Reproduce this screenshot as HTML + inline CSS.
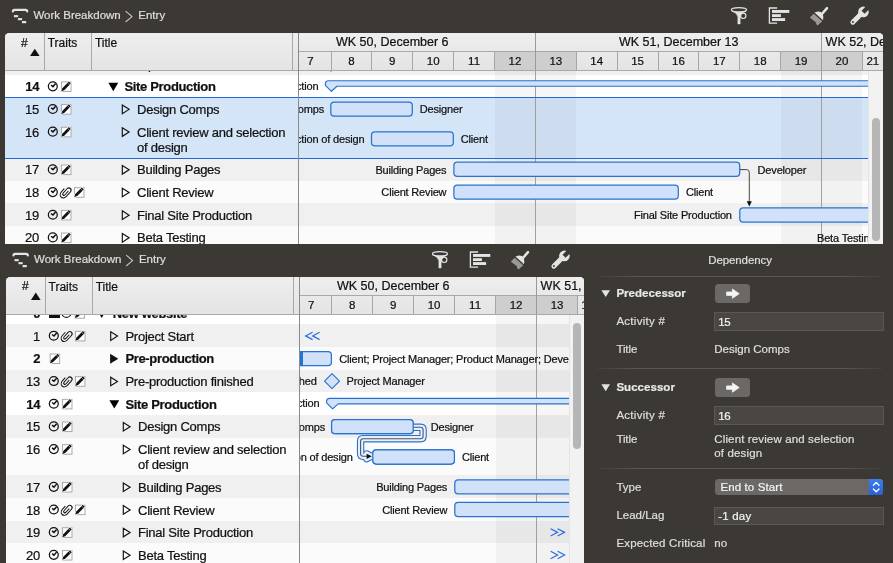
<!DOCTYPE html>
<html><head><meta charset="utf-8"><title>Work Breakdown</title>
<style>
html,body{margin:0;padding:0}
body{width:893px;height:563px;background:#3c3935;position:relative;overflow:hidden;font-family:"Liberation Sans",sans-serif;font-size:13px;line-height:16px;color:#111111}
.r{position:absolute;display:block}
.ic{overflow:visible}
.t{position:absolute;white-space:nowrap;-webkit-text-stroke:0.22px}
.p{position:absolute;overflow:hidden}
.b{box-sizing:border-box;border:1.3px solid #2873cf;background:#d0e1f9;border-radius:3.6px}
</style></head><body><div id="app" style="position:absolute;left:0;top:0;width:893px;height:563px;will-change:transform">
<svg width="0" height="0" style="position:absolute"><defs>
<g id="ck"><circle r="4.45" fill="none" stroke="#111" stroke-width="1.25"/><path d="M-1.7 -1.2 L0.2 0.3 L2.8 -2.7" fill="none" stroke="#111" stroke-width="1.5"/></g>
<g id="pc"><g transform="rotate(42)"><path d="M1.5 -2.6 L1.5 2.3 A1.5 1.5 0 0 1 -1.5 2.3 L-1.5 -3.2 A2.75 2.75 0 0 1 4 -3.2 L4 2.6 A4 4 0 0 1 -4 2.6 L-4 -1.8" transform="translate(-0.4 0.3) scale(0.84 1)" fill="none" stroke="#111" stroke-width="1.15"/></g></g>
<g id="nt"><rect x="-4.7" y="-4.7" width="9.6" height="9.6" fill="#fdfdfd" stroke="#a2a2a2" stroke-width="0.9"/><path d="M-4.9 4.7 L-3.8 1.7 L2.7 -5 L4.7 -3 L-1.9 3.7 Z" fill="#111" stroke="#fff" stroke-width="1.2" paint-order="stroke" stroke-linejoin="round"/><path d="M1.3 -3.9 L3.5 -1.7" stroke="#fff" stroke-width="0.5"/></g>
<path id="to" d="M0.6 -4.3 L7.4 0 L0.6 4.3 Z" fill="none" stroke="#111" stroke-width="1.15"/>
<path id="tr" d="M0 -5 L8.2 0 L0 5 Z" fill="#111"/>
<path id="td" d="M0 -4.2 L9.8 -4.2 L4.9 4.2 Z"/>
</defs></svg>
<svg class="r" style="left:10px;top:7px" width="20" height="18" viewBox="10 7 20 18"><g transform="translate(0 0)"><path d="M12.9 11.5 Q12.9 9.9 14.6 9.9 L25.5 9.9 Q27.2 9.9 27.2 11.5" fill="none" stroke="#e4e4e4" stroke-width="2.2" stroke-linecap="round"/><rect x="13.9" y="15.1" width="4.2" height="2.1" fill="#e4e4e4"/><rect x="17.9" y="18.1" width="4.2" height="2.1" fill="#e4e4e4"/><rect x="22" y="21" width="4.2" height="2.2" fill="#e4e4e4"/></g></svg>
<span class="t" style="left:33.4px;top:7px;font-size:11.5px;color:#dedede;">Work Breakdown</span>
<svg class="r" style="left:123px;top:9px" width="12" height="15" viewBox="123 9 12 15"><path d="M125.6 11.2 L132 16.6 L125.6 22" fill="none" stroke="#c6c6c6" stroke-width="1.1"/></svg>
<span class="t" style="left:138.3px;top:7px;font-size:11.5px;color:#dedede;">Entry</span>
<svg class="r" style="left:728px;top:4px" width="144" height="24" viewBox="728 4 144 24"><g transform="translate(0 0)"><ellipse cx="738.95" cy="9.8" rx="7.5" ry="2.2" fill="none" stroke="#e4e4e4" stroke-width="1.3"/><path d="M731.7 10.8 Q737 13.2 737.8 16.8 L737.8 24 L740.2 24 L740.2 16.8 Q741 13.2 746.3 10.8 Q739 13.6 731.7 10.8 Z" fill="#e4e4e4" stroke="#e4e4e4" stroke-width="0.4" stroke-linejoin="round"/><circle cx="743.2" cy="15.8" r="2.7" fill="none" stroke="#e4e4e4" stroke-width="1.15"/><path d="M777.1 8 L769.4 8 L769.4 23.2 L777.1 23.2" fill="none" stroke="#e4e4e4" stroke-width="1.3"/><rect x="772" y="10" width="17.3" height="2.9" fill="#e4e4e4"/><rect x="772" y="14.2" width="8.9" height="2.8" fill="#e4e4e4"/><rect x="772" y="18.1" width="13.1" height="2.9" fill="#e4e4e4"/><path d="M827 8.1 L821.3 14.7" stroke="#e4e4e4" stroke-width="2.5" stroke-linecap="round"/><path d="M814.5 12.5 Q818.4 10.9 820.8 11.9 L822.6 13.6 Q823.7 16.6 823 20.2 Z" fill="#e4e4e4"/><path d="M813.7 13.7 L822.2 21.2 L817.6 25.4 L815.6 23.6 L816.4 22.7 L809.8 17.5 Z" fill="#9a9794"/><path d="M852.8 22.2 L861 14" stroke="#e4e4e4" stroke-width="4.8" stroke-linecap="round"/><circle cx="863.4" cy="11.9" r="5.3" fill="#e4e4e4"/><path d="M863.1 12.2 L870 5.3" stroke="#3c3935" stroke-width="4.4"/><circle cx="852.9" cy="22.1" r="1" fill="#3c3935"/></g></svg>
<div class="p" style="left:5px;top:32.8px;width:878.3px;height:210.8px;background:#fbfbfb;border-radius:4.5px 4.5px 0 0;"><div class="r" style="left:-5px;top:-32.8px;width:893px;height:563px">
<div class="p" style="left:5px;top:70.5px;width:293.4px;height:173.1px;"><div class="r" style="left:-5px;top:-70.5px;width:893px;height:563px">
<div class="r" style="left:5px;top:52.23px;width:293.4px;height:22.97px;background:#f0f0f0;"></div>
<div class="r" style="left:5px;top:74.9px;width:293.4px;height:22.97px;background:#ffffff;"></div>
<div class="r" style="left:5px;top:97.57px;width:293.4px;height:22.97px;background:#d5e5f8;"></div>
<div class="r" style="left:5px;top:120.24px;width:293.4px;height:38.07px;background:#d5e5f8;"></div>
<div class="r" style="left:5px;top:158.01px;width:293.4px;height:22.97px;background:#f0f0f0;"></div>
<div class="r" style="left:5px;top:180.68px;width:293.4px;height:22.97px;background:#fbfbfb;"></div>
<div class="r" style="left:5px;top:203.35px;width:293.4px;height:22.97px;background:#f0f0f0;"></div>
<div class="r" style="left:5px;top:226.02px;width:293.4px;height:22.97px;background:#fbfbfb;"></div>
<span class="t" style="right:853.9px;top:57px;letter-spacing:-0.2px;">13</span>
<svg class="r" style="left:43px;top:54px" width="20" height="20" viewBox="-9.8 -9.63 20 20"><use href="#ck" /></svg>
<svg class="r" style="left:57px;top:54px" width="20" height="20" viewBox="-9.1 -9.83 20 20"><use href="#pc" /></svg>
<svg class="r" style="left:70px;top:54px" width="20" height="20" viewBox="-9.1 -9.93 20 20"><use href="#nt" /></svg>
<svg class="r" style="left:100px;top:55px" width="20" height="20" viewBox="-9.1 -9.03 20 20"><use href="#to" /></svg>
<span class="t" style="left:124.4px;top:57px;letter-spacing:-0.24px;">Pre-production finished</span>
<span class="t" style="right:853.9px;top:79px;font-weight:bold;letter-spacing:-0.3px;">14</span>
<svg class="r" style="left:43px;top:77px" width="20" height="20" viewBox="-9.8 -9.3 20 20"><use href="#ck" /></svg>
<svg class="r" style="left:57px;top:77px" width="20" height="20" viewBox="-9.1 -9.6 20 20"><use href="#nt" /></svg>
<svg class="r" style="left:99px;top:78px" width="20" height="20" viewBox="-9.4 -9 20 20"><use href="#td" /></svg>
<span class="t" style="left:124.4px;top:79px;font-weight:bold;letter-spacing:-0.33px;">Site Production</span>
<span class="t" style="right:853.9px;top:102px;letter-spacing:-0.2px;">15</span>
<svg class="r" style="left:43px;top:99px" width="20" height="20" viewBox="-9.8 -9.97 20 20"><use href="#ck" /></svg>
<svg class="r" style="left:57px;top:100px" width="20" height="20" viewBox="-9.1 -9.27 20 20"><use href="#nt" /></svg>
<svg class="r" style="left:112px;top:100px" width="20" height="20" viewBox="-9.7 -9.37 20 20"><use href="#to" /></svg>
<span class="t" style="left:137px;top:102px;letter-spacing:-0.24px;">Design Comps</span>
<span class="t" style="right:853.9px;top:125px;letter-spacing:-0.2px;">16</span>
<svg class="r" style="left:43px;top:122px" width="20" height="20" viewBox="-9.8 -9.64 20 20"><use href="#ck" /></svg>
<svg class="r" style="left:57px;top:122px" width="20" height="20" viewBox="-9.1 -9.94 20 20"><use href="#nt" /></svg>
<svg class="r" style="left:112px;top:123px" width="20" height="20" viewBox="-9.7 -9.04 20 20"><use href="#to" /></svg>
<span class="t" style="left:137px;top:125px;letter-spacing:-0.24px;">Client review and selection</span>
<span class="t" style="left:137px;top:140px;letter-spacing:-0.24px;">of design</span>
<span class="t" style="right:853.9px;top:162px;letter-spacing:-0.2px;">17</span>
<svg class="r" style="left:43px;top:160px" width="20" height="20" viewBox="-9.8 -9.41 20 20"><use href="#ck" /></svg>
<svg class="r" style="left:57px;top:160px" width="20" height="20" viewBox="-9.1 -9.71 20 20"><use href="#nt" /></svg>
<svg class="r" style="left:112px;top:160px" width="20" height="20" viewBox="-9.7 -9.81 20 20"><use href="#to" /></svg>
<span class="t" style="left:137px;top:162px;letter-spacing:-0.24px;">Building Pages</span>
<span class="t" style="right:853.9px;top:185px;letter-spacing:-0.2px;">18</span>
<svg class="r" style="left:43px;top:183px" width="20" height="20" viewBox="-9.8 -9.08 20 20"><use href="#ck" /></svg>
<svg class="r" style="left:57px;top:183px" width="20" height="20" viewBox="-9.1 -9.28 20 20"><use href="#pc" /></svg>
<svg class="r" style="left:70px;top:183px" width="20" height="20" viewBox="-9.1 -9.38 20 20"><use href="#nt" /></svg>
<svg class="r" style="left:112px;top:183px" width="20" height="20" viewBox="-9.7 -9.48 20 20"><use href="#to" /></svg>
<span class="t" style="left:137px;top:185px;letter-spacing:-0.24px;">Client Review</span>
<span class="t" style="right:853.9px;top:208px;letter-spacing:-0.2px;">19</span>
<svg class="r" style="left:43px;top:205px" width="20" height="20" viewBox="-9.8 -9.75 20 20"><use href="#ck" /></svg>
<svg class="r" style="left:57px;top:206px" width="20" height="20" viewBox="-9.1 -9.05 20 20"><use href="#nt" /></svg>
<svg class="r" style="left:112px;top:206px" width="20" height="20" viewBox="-9.7 -9.15 20 20"><use href="#to" /></svg>
<span class="t" style="left:137px;top:208px;letter-spacing:-0.24px;">Final Site Production</span>
<span class="t" style="right:853.9px;top:230px;letter-spacing:-0.2px;">20</span>
<svg class="r" style="left:43px;top:228px" width="20" height="20" viewBox="-9.8 -9.42 20 20"><use href="#ck" /></svg>
<svg class="r" style="left:57px;top:228px" width="20" height="20" viewBox="-9.1 -9.72 20 20"><use href="#nt" /></svg>
<svg class="r" style="left:112px;top:228px" width="20" height="20" viewBox="-9.7 -9.82 20 20"><use href="#to" /></svg>
<span class="t" style="left:137px;top:230px;letter-spacing:-0.24px;">Beta Testing</span>
</div></div>
<div class="r" style="left:5px;top:32.8px;width:293.4px;height:37.7px;background:linear-gradient(#eeeeee,#e4e4e4);"></div>
<div class="r" style="left:44.1px;top:32.8px;width:1px;height:37.7px;background:#a8a8a8;"></div>
<div class="r" style="left:91.1px;top:32.8px;width:1px;height:37.7px;background:#a8a8a8;"></div>
<div class="r" style="left:292.3px;top:32.8px;width:1px;height:37.7px;background:#a8a8a8;"></div>
<span class="t" style="left:21px;top:35px;font-size:12px;">#</span>
<svg class="r" style="left:29px;top:47px" width="12" height="11" viewBox="29 47 12 11"><path d="M30 56.1 L34.8 48.7 L39.6 56.1 Z" fill="#111"/></svg>
<span class="t" style="left:47.7px;top:35px;font-size:12px;">Traits</span>
<span class="t" style="left:94.9px;top:35px;font-size:12px;">Title</span>
<div class="p" style="left:298.4px;top:32.8px;width:569.6px;height:210.8px;"><div class="r" style="left:-298.4px;top:-32.8px;width:893px;height:563px">
<div class="r" style="left:298.4px;top:52.23px;width:569.6px;height:22.97px;background:#f0f0f0;"></div>
<div class="r" style="left:298.4px;top:74.9px;width:569.6px;height:22.97px;background:#ffffff;"></div>
<div class="r" style="left:298.4px;top:97.57px;width:569.6px;height:22.97px;background:#d5e5f8;"></div>
<div class="r" style="left:298.4px;top:120.24px;width:569.6px;height:38.07px;background:#d5e5f8;"></div>
<div class="r" style="left:298.4px;top:158.01px;width:569.6px;height:22.97px;background:#f0f0f0;"></div>
<div class="r" style="left:298.4px;top:180.68px;width:569.6px;height:22.97px;background:#fbfbfb;"></div>
<div class="r" style="left:298.4px;top:203.35px;width:569.6px;height:22.97px;background:#f0f0f0;"></div>
<div class="r" style="left:298.4px;top:226.02px;width:569.6px;height:22.97px;background:#fbfbfb;"></div>
<div class="r" style="left:494.52px;top:70.5px;width:40.88px;height:173.5px;background:rgba(0,0,0,0.035);"></div>
<div class="r" style="left:535.4px;top:70.5px;width:40.88px;height:173.5px;background:rgba(0,0,0,0.035);"></div>
<div class="r" style="left:780.68px;top:70.5px;width:40.88px;height:173.5px;background:rgba(0,0,0,0.035);"></div>
<div class="r" style="left:821.56px;top:70.5px;width:40.88px;height:173.5px;background:rgba(0,0,0,0.035);"></div>
<div class="r" style="left:534.9px;top:70.5px;width:1px;height:173.5px;background:#a0a0a0;"></div>
<div class="r" style="left:821.06px;top:70.5px;width:1px;height:173.5px;background:#a0a0a0;"></div>
<svg class="r" style="left:322px;top:78px" width="546" height="17" viewBox="322 78 546 17"><path d="M888 80.7 L328.4 80.7 Q325.4 80.7 325.4 83.7 L325.4 85.3 L331.4 91.3 L337 86.2 L888 86.2" fill="#d0e1f9" stroke="#2873cf" stroke-width="1.15" stroke-linejoin="round"/></svg>
<svg class="r" style="left:322px;top:53px" width="18" height="21" viewBox="322 53 18 21"><path d="M323.4 63.63 L331 56.03 L338.6 63.63 L331 71.23 Z" fill="#d0e1f9" stroke="#2873cf" stroke-width="1.1" stroke-linejoin="round"/></svg>
<span class="t" style="right:574.6px;top:78px;font-size:11px;letter-spacing:-0.17px;">Site Production</span>
<svg class="r" style="left:329px;top:100px" width="85" height="18" viewBox="329 100 85 18"><rect x="330.8" y="102.07" width="81.5" height="14.1" rx="3.4" fill="#d0e1f9" stroke="#2873cf" stroke-width="1.25"/></svg>
<span class="t" style="right:569px;top:101px;font-size:11px;letter-spacing:-0.17px;">Design Comps</span>
<span class="t" style="left:419.8px;top:101px;font-size:11px;letter-spacing:-0.17px;">Designer</span>
<svg class="r" style="left:369px;top:130px" width="86" height="18" viewBox="369 130 86 18"><rect x="371.5" y="131.84" width="81.8" height="14.1" rx="3.4" fill="#d0e1f9" stroke="#2873cf" stroke-width="1.25"/></svg>
<span class="t" style="right:528.6px;top:131px;font-size:11px;letter-spacing:-0.17px;">Client review and selection of design</span>
<span class="t" style="left:460.7px;top:131px;font-size:11px;letter-spacing:-0.17px;">Client</span>
<svg class="r" style="left:452px;top:160px" width="290" height="18" viewBox="452 160 290 18"><rect x="453.9" y="162.21" width="285.8" height="14.1" rx="3.4" fill="#d0e1f9" stroke="#2873cf" stroke-width="1.25"/></svg>
<span class="t" style="right:446.6px;top:162px;font-size:11px;letter-spacing:-0.17px;">Building Pages</span>
<span class="t" style="left:757.6px;top:162px;font-size:11px;letter-spacing:-0.17px;">Developer</span>
<svg class="r" style="left:452px;top:183px" width="228" height="18" viewBox="452 183 228 18"><rect x="453.9" y="185.08" width="224.4" height="14.1" rx="3.4" fill="#d0e1f9" stroke="#2873cf" stroke-width="1.25"/></svg>
<span class="t" style="right:446.6px;top:184px;font-size:11px;letter-spacing:-0.17px;">Client Review</span>
<span class="t" style="left:685.9px;top:184px;font-size:11px;letter-spacing:-0.17px;">Client</span>
<svg class="r" style="left:738px;top:206px" width="203" height="18" viewBox="738 206 203 18"><rect x="739.8" y="207.95" width="198.8" height="14.1" rx="3.4" fill="#d0e1f9" stroke="#2873cf" stroke-width="1.25"/></svg>
<span class="t" style="right:161.2px;top:207px;font-size:11px;letter-spacing:-0.17px;">Final Site Production</span>
<span class="t" style="left:817px;top:230px;font-size:11px;letter-spacing:-0.17px;">Beta Testing</span>
<svg class="r" style="left:738px;top:160px" width="20" height="50" viewBox="738 160 20 50"><path d="M740 169.6 L746.6 169.6 Q749.3 169.6 749.3 172.4 L749.3 202" fill="none" stroke="#333" stroke-width="0.9"/><path d="M746.7 201.2 L751.9 201.2 L749.3 206.4 Z" fill="#111"/></svg>
</div></div>
<div class="r" style="left:5px;top:97.07px;width:863px;height:1.2px;background:#2169d6;"></div>
<div class="r" style="left:5px;top:157.51px;width:863px;height:1.2px;background:#2169d6;"></div>
<div class="r" style="left:297.8px;top:32.8px;width:1.2px;height:210.8px;background:#8a8a8a;"></div>
<div class="r" style="left:868px;top:32.8px;width:15.3px;height:210.8px;background:#f2f2f2;"></div>
<div class="p" style="left:298.4px;top:32.8px;width:584.9px;height:37.7px;"><div class="r" style="left:-298.4px;top:-32.8px;width:893px;height:563px">
<div class="r" style="left:298.4px;top:32.8px;width:584.9px;height:37.7px;background:linear-gradient(#eeeeee,#e4e4e4);"></div>
<div class="r" style="left:494.52px;top:51.5px;width:40.88px;height:19px;background:#cecece;"></div>
<div class="r" style="left:535.4px;top:51.5px;width:40.88px;height:19px;background:#cecece;"></div>
<div class="r" style="left:780.68px;top:51.5px;width:40.88px;height:19px;background:#cecece;"></div>
<div class="r" style="left:821.56px;top:51.5px;width:40.88px;height:19px;background:#cecece;"></div>
<div class="r" style="left:298.4px;top:51px;width:584.9px;height:1px;background:#a9a9a9;"></div>
<div class="r" style="left:289.62px;top:51.5px;width:1px;height:19px;background:#a6a6a6;"></div>
<span class="t" style="left:310.56px;top:53px;font-size:11.5px;transform:translateX(-50%);">7</span>
<div class="r" style="left:330.5px;top:51.5px;width:1px;height:19px;background:#a6a6a6;"></div>
<span class="t" style="left:351.44px;top:53px;font-size:11.5px;transform:translateX(-50%);">8</span>
<div class="r" style="left:371.38px;top:51.5px;width:1px;height:19px;background:#a6a6a6;"></div>
<span class="t" style="left:392.32px;top:53px;font-size:11.5px;transform:translateX(-50%);">9</span>
<div class="r" style="left:412.26px;top:51.5px;width:1px;height:19px;background:#a6a6a6;"></div>
<span class="t" style="left:433.2px;top:53px;font-size:11.5px;transform:translateX(-50%);">10</span>
<div class="r" style="left:453.14px;top:51.5px;width:1px;height:19px;background:#a6a6a6;"></div>
<span class="t" style="left:474.08px;top:53px;font-size:11.5px;transform:translateX(-50%);">11</span>
<div class="r" style="left:494.02px;top:51.5px;width:1px;height:19px;background:#a6a6a6;"></div>
<span class="t" style="left:514.96px;top:53px;font-size:11.5px;transform:translateX(-50%);">12</span>
<div class="r" style="left:534.9px;top:51.5px;width:1px;height:19px;background:#a6a6a6;"></div>
<span class="t" style="left:555.84px;top:53px;font-size:11.5px;transform:translateX(-50%);">13</span>
<div class="r" style="left:575.78px;top:51.5px;width:1px;height:19px;background:#a6a6a6;"></div>
<span class="t" style="left:596.72px;top:53px;font-size:11.5px;transform:translateX(-50%);">14</span>
<div class="r" style="left:616.66px;top:51.5px;width:1px;height:19px;background:#a6a6a6;"></div>
<span class="t" style="left:637.6px;top:53px;font-size:11.5px;transform:translateX(-50%);">15</span>
<div class="r" style="left:657.54px;top:51.5px;width:1px;height:19px;background:#a6a6a6;"></div>
<span class="t" style="left:678.48px;top:53px;font-size:11.5px;transform:translateX(-50%);">16</span>
<div class="r" style="left:698.42px;top:51.5px;width:1px;height:19px;background:#a6a6a6;"></div>
<span class="t" style="left:719.36px;top:53px;font-size:11.5px;transform:translateX(-50%);">17</span>
<div class="r" style="left:739.3px;top:51.5px;width:1px;height:19px;background:#a6a6a6;"></div>
<span class="t" style="left:760.24px;top:53px;font-size:11.5px;transform:translateX(-50%);">18</span>
<div class="r" style="left:780.18px;top:51.5px;width:1px;height:19px;background:#a6a6a6;"></div>
<span class="t" style="left:801.12px;top:53px;font-size:11.5px;transform:translateX(-50%);">19</span>
<div class="r" style="left:821.06px;top:51.5px;width:1px;height:19px;background:#a6a6a6;"></div>
<span class="t" style="left:842px;top:53px;font-size:11.5px;transform:translateX(-50%);">20</span>
<div class="r" style="left:861.94px;top:51.5px;width:1px;height:19px;background:#a6a6a6;"></div>
<span class="t" style="left:872.87px;top:53px;font-size:11.5px;transform:translateX(-50%);">21</span>
<span class="t" style="left:336px;top:34px;font-size:12.5px;">WK 50, December 6</span>
<div class="r" style="left:534.9px;top:32.8px;width:1px;height:37.7px;background:#9a9a9a;"></div>
<span class="t" style="left:619px;top:34px;font-size:12.5px;">WK 51, December 13</span>
<div class="r" style="left:821.06px;top:32.8px;width:1px;height:37.7px;background:#9a9a9a;"></div>
<span class="t" style="left:825.6px;top:34px;font-size:12.5px;">WK 52, December 20</span>
</div></div>
<div class="r" style="left:867.5px;top:70.5px;width:1px;height:173.1px;background:#e4e4e4;"></div>
<div class="r" style="left:5px;top:70px;width:878.3px;height:1px;background:#a9a9a9;"></div>
<div class="r" style="left:297.8px;top:32.8px;width:1.2px;height:210.8px;background:#8a8a8a;"></div>
<div class="r" style="left:872.2px;top:118px;width:7.8px;height:123px;background:#b6b6b6;border-radius:4px"></div>
</div></div>
<svg class="r" style="left:10px;top:251px" width="21" height="18" viewBox="10 251 21 18"><g transform="translate(0.6 244)"><path d="M12.9 11.5 Q12.9 9.9 14.6 9.9 L25.5 9.9 Q27.2 9.9 27.2 11.5" fill="none" stroke="#e4e4e4" stroke-width="2.2" stroke-linecap="round"/><rect x="13.9" y="15.1" width="4.2" height="2.1" fill="#e4e4e4"/><rect x="17.9" y="18.1" width="4.2" height="2.1" fill="#e4e4e4"/><rect x="22" y="21" width="4.2" height="2.2" fill="#e4e4e4"/></g></svg>
<span class="t" style="left:34px;top:251px;font-size:11.5px;color:#dedede;">Work Breakdown</span>
<svg class="r" style="left:123px;top:253px" width="13" height="15" viewBox="123 253 13 15"><path d="M126.2 255.2 L132.6 260.6 L126.2 266" fill="none" stroke="#c6c6c6" stroke-width="1.1"/></svg>
<span class="t" style="left:138.9px;top:251px;font-size:11.5px;color:#dedede;">Entry</span>
<svg class="r" style="left:429px;top:248px" width="144" height="24" viewBox="429 248 144 24"><g transform="translate(-299 244)"><ellipse cx="738.95" cy="9.8" rx="7.5" ry="2.2" fill="none" stroke="#e4e4e4" stroke-width="1.3"/><path d="M731.7 10.8 Q737 13.2 737.8 16.8 L737.8 24 L740.2 24 L740.2 16.8 Q741 13.2 746.3 10.8 Q739 13.6 731.7 10.8 Z" fill="#e4e4e4" stroke="#e4e4e4" stroke-width="0.4" stroke-linejoin="round"/><circle cx="743.2" cy="15.8" r="2.7" fill="none" stroke="#e4e4e4" stroke-width="1.15"/><path d="M777.1 8 L769.4 8 L769.4 23.2 L777.1 23.2" fill="none" stroke="#e4e4e4" stroke-width="1.3"/><rect x="772" y="10" width="17.3" height="2.9" fill="#e4e4e4"/><rect x="772" y="14.2" width="8.9" height="2.8" fill="#e4e4e4"/><rect x="772" y="18.1" width="13.1" height="2.9" fill="#e4e4e4"/><path d="M827 8.1 L821.3 14.7" stroke="#e4e4e4" stroke-width="2.5" stroke-linecap="round"/><path d="M814.5 12.5 Q818.4 10.9 820.8 11.9 L822.6 13.6 Q823.7 16.6 823 20.2 Z" fill="#e4e4e4"/><path d="M813.7 13.7 L822.2 21.2 L817.6 25.4 L815.6 23.6 L816.4 22.7 L809.8 17.5 Z" fill="#9a9794"/><path d="M852.8 22.2 L861 14" stroke="#e4e4e4" stroke-width="4.8" stroke-linecap="round"/><circle cx="863.4" cy="11.9" r="5.3" fill="#e4e4e4"/><path d="M863.1 12.2 L870 5.3" stroke="#3c3935" stroke-width="4.4"/><circle cx="852.9" cy="22.1" r="1" fill="#3c3935"/></g></svg>
<div class="p" style="left:6px;top:276.7px;width:578.2px;height:286.3px;background:#fbfbfb;border-radius:4.5px 4.5px 0 0;"><div class="r" style="left:-6px;top:-276.7px;width:893px;height:563px">
<div class="p" style="left:6px;top:314.4px;width:293.4px;height:248.6px;"><div class="r" style="left:-6px;top:-314.4px;width:893px;height:563px">
<div class="r" style="left:6px;top:301.63px;width:293.4px;height:22.97px;background:#ffffff;"></div>
<div class="r" style="left:6px;top:324.3px;width:293.4px;height:22.97px;background:#f0f0f0;"></div>
<div class="r" style="left:6px;top:346.97px;width:293.4px;height:22.97px;background:#fbfbfb;"></div>
<div class="r" style="left:6px;top:369.64px;width:293.4px;height:22.97px;background:#f0f0f0;"></div>
<div class="r" style="left:6px;top:392.31px;width:293.4px;height:22.97px;background:#ffffff;"></div>
<div class="r" style="left:6px;top:414.98px;width:293.4px;height:22.97px;background:#f0f0f0;"></div>
<div class="r" style="left:6px;top:437.65px;width:293.4px;height:38.07px;background:#fbfbfb;"></div>
<div class="r" style="left:6px;top:475.42px;width:293.4px;height:22.97px;background:#f0f0f0;"></div>
<div class="r" style="left:6px;top:498.09px;width:293.4px;height:22.97px;background:#fbfbfb;"></div>
<div class="r" style="left:6px;top:520.76px;width:293.4px;height:22.97px;background:#f0f0f0;"></div>
<div class="r" style="left:6px;top:543.43px;width:293.4px;height:22.97px;background:#fbfbfb;"></div>
<span class="t" style="right:852.9px;top:306px;font-weight:bold;letter-spacing:-0.3px;">0</span>
<div class="r" style="left:49.4px;top:307.23px;width:11px;height:11px;background:#111;"></div>
<svg class="r" style="left:57px;top:304px" width="20" height="20" viewBox="-9.4 -9.03 20 20"><use href="#ck" /></svg>
<svg class="r" style="left:70px;top:304px" width="20" height="20" viewBox="-9.7 -9.33 20 20"><use href="#nt" /></svg>
<svg class="r" style="left:87px;top:304px" width="20" height="20" viewBox="-9.8 -9.73 20 20"><use href="#td" /></svg>
<span class="t" style="left:112.8px;top:306px;font-weight:bold;letter-spacing:-0.33px;">New website</span>
<span class="t" style="right:852.9px;top:329px;letter-spacing:-0.2px;">1</span>
<svg class="r" style="left:44px;top:326px" width="20" height="20" viewBox="-9.8 -9.7 20 20"><use href="#ck" /></svg>
<svg class="r" style="left:58px;top:326px" width="20" height="20" viewBox="-9.1 -9.9 20 20"><use href="#pc" /></svg>
<svg class="r" style="left:71px;top:327px" width="20" height="20" viewBox="-9.1 -9 20 20"><use href="#nt" /></svg>
<svg class="r" style="left:101px;top:327px" width="20" height="20" viewBox="-9.1 -9.1 20 20"><use href="#to" /></svg>
<span class="t" style="left:125.4px;top:329px;letter-spacing:-0.24px;">Project Start</span>
<span class="t" style="right:852.9px;top:351px;font-weight:bold;letter-spacing:-0.3px;">2</span>
<svg class="r" style="left:45px;top:349px" width="20" height="20" viewBox="-9.8 -9.67 20 20"><use href="#nt" /></svg>
<svg class="r" style="left:101px;top:349px" width="20" height="20" viewBox="-9.1 -9.77 20 20"><use href="#tr" /></svg>
<span class="t" style="left:125.4px;top:351px;font-weight:bold;letter-spacing:-0.33px;">Pre-production</span>
<span class="t" style="right:852.9px;top:374px;letter-spacing:-0.2px;">13</span>
<svg class="r" style="left:44px;top:372px" width="20" height="20" viewBox="-9.8 -9.04 20 20"><use href="#ck" /></svg>
<svg class="r" style="left:58px;top:372px" width="20" height="20" viewBox="-9.1 -9.24 20 20"><use href="#pc" /></svg>
<svg class="r" style="left:71px;top:372px" width="20" height="20" viewBox="-9.1 -9.34 20 20"><use href="#nt" /></svg>
<svg class="r" style="left:101px;top:372px" width="20" height="20" viewBox="-9.1 -9.44 20 20"><use href="#to" /></svg>
<span class="t" style="left:125.4px;top:374px;letter-spacing:-0.24px;">Pre-production finished</span>
<span class="t" style="right:852.9px;top:397px;font-weight:bold;letter-spacing:-0.3px;">14</span>
<svg class="r" style="left:44px;top:394px" width="20" height="20" viewBox="-9.8 -9.71 20 20"><use href="#ck" /></svg>
<svg class="r" style="left:58px;top:395px" width="20" height="20" viewBox="-9.1 -9.01 20 20"><use href="#nt" /></svg>
<svg class="r" style="left:100px;top:395px" width="20" height="20" viewBox="-9.4 -9.41 20 20"><use href="#td" /></svg>
<span class="t" style="left:125.4px;top:397px;font-weight:bold;letter-spacing:-0.33px;">Site Production</span>
<span class="t" style="right:852.9px;top:419px;letter-spacing:-0.2px;">15</span>
<svg class="r" style="left:44px;top:417px" width="20" height="20" viewBox="-9.8 -9.38 20 20"><use href="#ck" /></svg>
<svg class="r" style="left:58px;top:417px" width="20" height="20" viewBox="-9.1 -9.68 20 20"><use href="#nt" /></svg>
<svg class="r" style="left:113px;top:417px" width="20" height="20" viewBox="-9.7 -9.78 20 20"><use href="#to" /></svg>
<span class="t" style="left:138px;top:419px;letter-spacing:-0.24px;">Design Comps</span>
<span class="t" style="right:852.9px;top:442px;letter-spacing:-0.2px;">16</span>
<svg class="r" style="left:44px;top:440px" width="20" height="20" viewBox="-9.8 -9.05 20 20"><use href="#ck" /></svg>
<svg class="r" style="left:58px;top:440px" width="20" height="20" viewBox="-9.1 -9.35 20 20"><use href="#nt" /></svg>
<svg class="r" style="left:113px;top:440px" width="20" height="20" viewBox="-9.7 -9.45 20 20"><use href="#to" /></svg>
<span class="t" style="left:138px;top:442px;letter-spacing:-0.24px;">Client review and selection</span>
<span class="t" style="left:138px;top:457px;letter-spacing:-0.24px;">of design</span>
<span class="t" style="right:852.9px;top:480px;letter-spacing:-0.2px;">17</span>
<svg class="r" style="left:44px;top:477px" width="20" height="20" viewBox="-9.8 -9.82 20 20"><use href="#ck" /></svg>
<svg class="r" style="left:58px;top:478px" width="20" height="20" viewBox="-9.1 -9.12 20 20"><use href="#nt" /></svg>
<svg class="r" style="left:113px;top:478px" width="20" height="20" viewBox="-9.7 -9.22 20 20"><use href="#to" /></svg>
<span class="t" style="left:138px;top:480px;letter-spacing:-0.24px;">Building Pages</span>
<span class="t" style="right:852.9px;top:503px;letter-spacing:-0.2px;">18</span>
<svg class="r" style="left:44px;top:500px" width="20" height="20" viewBox="-9.8 -9.49 20 20"><use href="#ck" /></svg>
<svg class="r" style="left:58px;top:500px" width="20" height="20" viewBox="-9.1 -9.69 20 20"><use href="#pc" /></svg>
<svg class="r" style="left:71px;top:500px" width="20" height="20" viewBox="-9.1 -9.79 20 20"><use href="#nt" /></svg>
<svg class="r" style="left:113px;top:500px" width="20" height="20" viewBox="-9.7 -9.89 20 20"><use href="#to" /></svg>
<span class="t" style="left:138px;top:503px;letter-spacing:-0.24px;">Client Review</span>
<span class="t" style="right:852.9px;top:525px;letter-spacing:-0.2px;">19</span>
<svg class="r" style="left:44px;top:523px" width="20" height="20" viewBox="-9.8 -9.16 20 20"><use href="#ck" /></svg>
<svg class="r" style="left:58px;top:523px" width="20" height="20" viewBox="-9.1 -9.46 20 20"><use href="#nt" /></svg>
<svg class="r" style="left:113px;top:523px" width="20" height="20" viewBox="-9.7 -9.56 20 20"><use href="#to" /></svg>
<span class="t" style="left:138px;top:525px;letter-spacing:-0.24px;">Final Site Production</span>
<span class="t" style="right:852.9px;top:548px;letter-spacing:-0.2px;">20</span>
<svg class="r" style="left:44px;top:545px" width="20" height="20" viewBox="-9.8 -9.83 20 20"><use href="#ck" /></svg>
<svg class="r" style="left:58px;top:546px" width="20" height="20" viewBox="-9.1 -9.13 20 20"><use href="#nt" /></svg>
<svg class="r" style="left:113px;top:546px" width="20" height="20" viewBox="-9.7 -9.23 20 20"><use href="#to" /></svg>
<span class="t" style="left:138px;top:548px;letter-spacing:-0.24px;">Beta Testing</span>
</div></div>
<div class="r" style="left:6px;top:276.7px;width:293.4px;height:37.7px;background:linear-gradient(#eeeeee,#e4e4e4);"></div>
<div class="r" style="left:44.9px;top:276.7px;width:1px;height:37.7px;background:#a8a8a8;"></div>
<div class="r" style="left:91.9px;top:276.7px;width:1px;height:37.7px;background:#a8a8a8;"></div>
<div class="r" style="left:293.1px;top:276.7px;width:1px;height:37.7px;background:#a8a8a8;"></div>
<span class="t" style="left:22px;top:278px;font-size:12px;">#</span>
<svg class="r" style="left:30px;top:291px" width="12" height="11" viewBox="30 291 12 11"><path d="M31 300 L35.8 292.6 L40.6 300 Z" fill="#111"/></svg>
<span class="t" style="left:48.5px;top:279px;font-size:12px;">Traits</span>
<span class="t" style="left:95.7px;top:279px;font-size:12px;">Title</span>
<div class="p" style="left:299.4px;top:276.7px;width:269.8px;height:286.3px;"><div class="r" style="left:-299.4px;top:-276.7px;width:893px;height:563px">
<div class="r" style="left:299.4px;top:301.63px;width:269.8px;height:22.97px;background:#ffffff;"></div>
<div class="r" style="left:299.4px;top:324.3px;width:269.8px;height:22.97px;background:#f0f0f0;"></div>
<div class="r" style="left:299.4px;top:346.97px;width:269.8px;height:22.97px;background:#fbfbfb;"></div>
<div class="r" style="left:299.4px;top:369.64px;width:269.8px;height:22.97px;background:#f0f0f0;"></div>
<div class="r" style="left:299.4px;top:392.31px;width:269.8px;height:22.97px;background:#ffffff;"></div>
<div class="r" style="left:299.4px;top:414.98px;width:269.8px;height:22.97px;background:#f0f0f0;"></div>
<div class="r" style="left:299.4px;top:437.65px;width:269.8px;height:38.07px;background:#fbfbfb;"></div>
<div class="r" style="left:299.4px;top:475.42px;width:269.8px;height:22.97px;background:#f0f0f0;"></div>
<div class="r" style="left:299.4px;top:498.09px;width:269.8px;height:22.97px;background:#fbfbfb;"></div>
<div class="r" style="left:299.4px;top:520.76px;width:269.8px;height:22.97px;background:#f0f0f0;"></div>
<div class="r" style="left:299.4px;top:543.43px;width:269.8px;height:22.97px;background:#fbfbfb;"></div>
<div class="r" style="left:495.6px;top:314.4px;width:41px;height:248.6px;background:rgba(0,0,0,0.035);"></div>
<div class="r" style="left:536.6px;top:314.4px;width:41px;height:248.6px;background:rgba(0,0,0,0.035);"></div>
<div class="r" style="left:536.1px;top:314.4px;width:1px;height:248.6px;background:#a0a0a0;"></div>
<svg class="r" style="left:303px;top:329px" width="19" height="13" viewBox="303 329 19 13"><path d="M312.6 332.2 L305.6 335.9 L312.6 339.6 M319.6 332.2 L312.6 335.9 L319.6 339.6 " fill="none" stroke="#2a6de0" stroke-width="1.2"/></svg>
<svg class="r" style="left:289px;top:349px" width="44" height="19" viewBox="289 349 44 19"><rect x="290.6" y="351.57" width="40.8" height="14.1" rx="3.4" fill="#d0e1f9" stroke="#2873cf" stroke-width="1.25"/></svg>
<div class="r" style="left:299.4px;top:350.97px;width:3.4px;height:15.2px;background:#2873cf;"></div>
<span class="t" style="left:339.3px;top:351px;font-size:11px;letter-spacing:-0.17px;">Client; Project Manager; Product Manager; Developer</span>
<span class="t" style="right:576.4px;top:373px;font-size:11px;letter-spacing:-0.17px;">Pre-production finished</span>
<svg class="r" style="left:322px;top:371px" width="22" height="21" viewBox="322 371 22 21"><path d="M324.5 381.04 L332 373.54 L339.5 381.04 L332 388.54 Z" fill="#d0e1f9" stroke="#2873cf" stroke-width="1.1" stroke-linejoin="round"/></svg>
<span class="t" style="left:346.6px;top:373px;font-size:11px;letter-spacing:-0.17px;">Project Manager</span>
<svg class="r" style="left:323px;top:396px" width="247" height="17" viewBox="323 396 247 17"><path d="M589.2 398.31 L329.6 398.31 Q326.6 398.31 326.6 401.31 L326.6 402.91 L332.6 408.91 L338.2 403.81 L589.2 403.81" fill="#d0e1f9" stroke="#2873cf" stroke-width="1.15" stroke-linejoin="round"/></svg>
<span class="t" style="right:573.6px;top:395px;font-size:11px;letter-spacing:-0.17px;">Site Production</span>
<svg class="r" style="left:330px;top:418px" width="85" height="18" viewBox="330 418 85 18"><rect x="331.6" y="419.6" width="81.6" height="14.1" rx="3.4" fill="#d0e1f9" stroke="#2873cf" stroke-width="1.25"/></svg>
<span class="t" style="right:568px;top:419px;font-size:11px;letter-spacing:-0.17px;">Design Comps</span>
<span class="t" style="left:430.8px;top:419px;font-size:11px;letter-spacing:-0.17px;">Designer</span>
<svg class="r" style="left:371px;top:448px" width="85" height="18" viewBox="371 448 85 18"><rect x="372.8" y="449.9" width="81.6" height="14.1" rx="3.4" fill="#d0e1f9" stroke="#2873cf" stroke-width="1.25"/></svg>
<span class="t" style="right:540.4px;top:449px;font-size:11px;letter-spacing:-0.17px;">Client review and selection of design</span>
<span class="t" style="left:461.9px;top:449px;font-size:11px;letter-spacing:-0.17px;">Client</span>
<svg class="r" style="left:350px;top:415px" width="90" height="55" viewBox="350 415 90 55"><path d="M413 427.3 L420.6 427.3 Q423.1 427.3 423.1 429.8 L423.1 436.2 Q423.1 438.7 420.6 438.7 L363.1 438.7 Q360.6 438.7 360.6 441.2 L360.6 453.8 Q360.6 456.3 363.1 456.3 L367 456.3" fill="none" stroke="#2873cf" stroke-width="7.4" stroke-linejoin="round"/><path d="M366.6 453.7 L371.8 456.3 L366.6 458.9 Z" fill="#2873cf" stroke="#2873cf" stroke-width="7" stroke-linejoin="round"/><path d="M413 427.3 L420.6 427.3 Q423.1 427.3 423.1 429.8 L423.1 436.2 Q423.1 438.7 420.6 438.7 L363.1 438.7 Q360.6 438.7 360.6 441.2 L360.6 453.8 Q360.6 456.3 363.1 456.3 L367 456.3" fill="none" stroke="#e6effc" stroke-width="5.2" stroke-linejoin="round"/><path d="M366.6 453.7 L371.8 456.3 L366.6 458.9 Z" fill="#e6effc" stroke="#e6effc" stroke-width="4.8" stroke-linejoin="round"/><path d="M413 427.3 L420.6 427.3 Q423.1 427.3 423.1 429.8 L423.1 436.2 Q423.1 438.7 420.6 438.7 L363.1 438.7 Q360.6 438.7 360.6 441.2 L360.6 453.8 Q360.6 456.3 363.1 456.3 L367 456.3" fill="none" stroke="#555" stroke-width="1.1"/><path d="M366.6 453.7 L371.8 456.3 L366.6 458.9 Z" fill="#111"/></svg>
<svg class="r" style="left:330px;top:418px" width="85" height="18" viewBox="330 418 85 18"><rect x="331.6" y="419.6" width="81.6" height="14.1" rx="3.4" fill="#d0e1f9" stroke="#2873cf" stroke-width="1.25"/></svg>
<svg class="r" style="left:371px;top:448px" width="85" height="18" viewBox="371 448 85 18"><rect x="372.8" y="449.9" width="81.6" height="14.1" rx="3.4" fill="#d0e1f9" stroke="#2873cf" stroke-width="1.25"/></svg>
<svg class="r" style="left:453px;top:478px" width="203" height="18" viewBox="453 478 203 18"><rect x="454.8" y="479.82" width="198.8" height="14.1" rx="3.4" fill="#d0e1f9" stroke="#2873cf" stroke-width="1.25"/></svg>
<span class="t" style="right:445.8px;top:479px;font-size:11px;letter-spacing:-0.17px;">Building Pages</span>
<svg class="r" style="left:453px;top:500px" width="203" height="19" viewBox="453 500 203 19"><rect x="454.8" y="502.49" width="198.8" height="14.1" rx="3.4" fill="#d0e1f9" stroke="#2873cf" stroke-width="1.25"/></svg>
<span class="t" style="right:445.8px;top:502px;font-size:11px;letter-spacing:-0.17px;">Client Review</span>
<svg class="r" style="left:548px;top:526px" width="19" height="13" viewBox="548 526 19 13"><path d="M550.6 528.66 L557.6 532.36 L550.6 536.06 M557.6 528.66 L564.6 532.36 L557.6 536.06 " fill="none" stroke="#2a6de0" stroke-width="1.2"/></svg>
<svg class="r" style="left:548px;top:549px" width="19" height="13" viewBox="548 549 19 13"><path d="M550.6 551.33 L557.6 555.03 L550.6 558.73 M557.6 551.33 L564.6 555.03 L557.6 558.73 " fill="none" stroke="#2a6de0" stroke-width="1.2"/></svg>
</div></div>
<div class="r" style="left:298.8px;top:276.7px;width:1.2px;height:286.3px;background:#8a8a8a;"></div>
<div class="r" style="left:569.2px;top:276.7px;width:15px;height:286.3px;background:#f2f2f2;"></div>
<div class="p" style="left:299.4px;top:276.7px;width:284.8px;height:37.7px;"><div class="r" style="left:-299.4px;top:-276.7px;width:893px;height:563px">
<div class="r" style="left:299.4px;top:276.7px;width:284.8px;height:37.7px;background:linear-gradient(#eeeeee,#e4e4e4);"></div>
<div class="r" style="left:495.6px;top:295.4px;width:41px;height:19px;background:#cecece;"></div>
<div class="r" style="left:536.6px;top:295.4px;width:41px;height:19px;background:#cecece;"></div>
<div class="r" style="left:299.4px;top:294.9px;width:284.8px;height:1px;background:#a9a9a9;"></div>
<div class="r" style="left:290.1px;top:295.4px;width:1px;height:19px;background:#a6a6a6;"></div>
<span class="t" style="left:311.1px;top:297px;font-size:11.5px;transform:translateX(-50%);">7</span>
<div class="r" style="left:331.1px;top:295.4px;width:1px;height:19px;background:#a6a6a6;"></div>
<span class="t" style="left:352.1px;top:297px;font-size:11.5px;transform:translateX(-50%);">8</span>
<div class="r" style="left:372.1px;top:295.4px;width:1px;height:19px;background:#a6a6a6;"></div>
<span class="t" style="left:393.1px;top:297px;font-size:11.5px;transform:translateX(-50%);">9</span>
<div class="r" style="left:413.1px;top:295.4px;width:1px;height:19px;background:#a6a6a6;"></div>
<span class="t" style="left:434.1px;top:297px;font-size:11.5px;transform:translateX(-50%);">10</span>
<div class="r" style="left:454.1px;top:295.4px;width:1px;height:19px;background:#a6a6a6;"></div>
<span class="t" style="left:475.1px;top:297px;font-size:11.5px;transform:translateX(-50%);">11</span>
<div class="r" style="left:495.1px;top:295.4px;width:1px;height:19px;background:#a6a6a6;"></div>
<span class="t" style="left:516.1px;top:297px;font-size:11.5px;transform:translateX(-50%);">12</span>
<div class="r" style="left:536.1px;top:295.4px;width:1px;height:19px;background:#a6a6a6;"></div>
<span class="t" style="left:557.1px;top:297px;font-size:11.5px;transform:translateX(-50%);">13</span>
<div class="r" style="left:577.1px;top:295.4px;width:1px;height:19px;background:#a6a6a6;"></div>
<span class="t" style="left:581.2px;top:297px;font-size:11.5px;">14</span>
<span class="t" style="left:337px;top:278px;font-size:12.5px;">WK 50, December 6</span>
<div class="r" style="left:536.1px;top:276.7px;width:1px;height:37.7px;background:#9a9a9a;"></div>
<span class="t" style="left:540.6px;top:278px;font-size:12.5px;">WK 51, December 13</span>
</div></div>
<div class="r" style="left:568.7px;top:314.4px;width:1px;height:248.6px;background:#e4e4e4;"></div>
<div class="r" style="left:6px;top:313.9px;width:578.2px;height:1px;background:#a9a9a9;"></div>
<div class="r" style="left:298.8px;top:276.7px;width:1.2px;height:286.3px;background:#8a8a8a;"></div>
<div class="r" style="left:573.2px;top:322.9px;width:7.7px;height:125.8px;background:#b6b6b6;border-radius:4px"></div>
</div></div>
<span class="t" style="left:740px;top:252px;font-size:11.5px;color:#dedede;letter-spacing:-0.1px;transform:translateX(-50%);">Dependency</span>
<div class="r" style="left:597px;top:275.9px;width:286px;height:1px;background:linear-gradient(90deg,rgba(255,255,255,0.03),rgba(255,255,255,0.15) 14%,rgba(255,255,255,0.15) 86%,rgba(255,255,255,0.03));"></div>
<svg class="r" style="left:592px;top:284px" width="20" height="20" viewBox="-9.4 -9.6 20 20"><use href="#td" fill="#e2e2e2" transform="scale(0.88 0.82)"/></svg>
<span class="t" style="left:616.4px;top:285px;font-size:11.5px;color:#e8e8e8;font-weight:bold;letter-spacing:0.04px;">Predecessor</span>
<div class="r" style="left:715px;top:284.3px;width:35.4px;height:18.8px;background:#6b6865;border-radius:3.5px"></div>
<svg class="r" style="left:724px;top:286px" width="18" height="15" viewBox="724 286 18 15"><path d="M726.6 292 L732.4 292 L732.4 289.1 L739.2 293.7 L732.4 298.3 L732.4 295.4 L726.6 295.4 Z" fill="#f4f4f4" stroke="#f4f4f4" stroke-width="0.8" stroke-linejoin="round"/></svg>
<span class="t" style="left:616.4px;top:313px;font-size:11.5px;color:#dedede;letter-spacing:0.27px;">Activity #</span>
<div class="r" style="left:714px;top:312.3px;width:170px;height:18.5px;background:#4a4743;box-sizing:border-box;border:1px solid #5b5854"></div>
<span class="t" style="left:718.2px;top:314px;font-size:11.5px;color:#f2f2f2;letter-spacing:-0.3px;">15</span>
<span class="t" style="left:616.4px;top:341px;font-size:11.5px;color:#dedede;letter-spacing:-0.1px;">Title</span>
<span class="t" style="left:714.3px;top:341px;font-size:11.5px;color:#dedede;">Design Comps</span>
<div class="r" style="left:597px;top:368.1px;width:286px;height:1px;background:linear-gradient(90deg,rgba(255,255,255,0.03),rgba(255,255,255,0.15) 14%,rgba(255,255,255,0.15) 86%,rgba(255,255,255,0.03));"></div>
<svg class="r" style="left:592px;top:378px" width="20" height="20" viewBox="-9.4 -9.8 20 20"><use href="#td" fill="#e2e2e2" transform="scale(0.88 0.82)"/></svg>
<span class="t" style="left:616.4px;top:379px;font-size:11.5px;color:#e8e8e8;font-weight:bold;letter-spacing:0.04px;">Successor</span>
<div class="r" style="left:715px;top:378.2px;width:35.4px;height:18.8px;background:#6b6865;border-radius:3.5px"></div>
<svg class="r" style="left:724px;top:380px" width="18" height="15" viewBox="724 380 18 15"><path d="M726.6 385.9 L732.4 385.9 L732.4 383 L739.2 387.6 L732.4 392.2 L732.4 389.3 L726.6 389.3 Z" fill="#f4f4f4" stroke="#f4f4f4" stroke-width="0.8" stroke-linejoin="round"/></svg>
<span class="t" style="left:616.4px;top:407px;font-size:11.5px;color:#dedede;letter-spacing:0.27px;">Activity #</span>
<div class="r" style="left:714px;top:406.3px;width:170px;height:18.5px;background:#4a4743;box-sizing:border-box;border:1px solid #5b5854"></div>
<span class="t" style="left:718.2px;top:408px;font-size:11.5px;color:#f2f2f2;letter-spacing:-0.3px;">16</span>
<span class="t" style="left:616.4px;top:431px;font-size:11.5px;color:#dedede;letter-spacing:-0.1px;">Title</span>
<span class="t" style="left:714.3px;top:431px;font-size:11.5px;color:#dedede;letter-spacing:0.13px;">Client review and selection</span>
<span class="t" style="left:714.3px;top:445px;font-size:11.5px;color:#dedede;letter-spacing:0.15px;">of design</span>
<div class="r" style="left:597px;top:468.3px;width:286px;height:1px;background:linear-gradient(90deg,rgba(255,255,255,0.03),rgba(255,255,255,0.15) 14%,rgba(255,255,255,0.15) 86%,rgba(255,255,255,0.03));"></div>
<span class="t" style="left:616.4px;top:479px;font-size:11.5px;color:#dedede;">Type</span>
<div class="r" style="left:715px;top:479.4px;width:168.4px;height:15.6px;background:#6b6865;border-radius:3.5px"></div>
<div class="r" style="left:869px;top:479.4px;width:14.4px;height:15.6px;background:linear-gradient(#3d7df0,#2860da);border-radius:0 3.5px 3.5px 0"></div>
<svg class="r" style="left:870px;top:480px" width="12" height="14" viewBox="870 480 12 14"><path d="M873.4 485.2 L876.2 482.4 L879 485.2 M873.4 489 L876.2 491.8 L879 489" fill="none" stroke="#fff" stroke-width="1.3" stroke-linecap="round" stroke-linejoin="round"/></svg>
<span class="t" style="left:720.4px;top:479px;font-size:11.5px;color:#f4f4f4;letter-spacing:0.12px;">End to Start</span>
<span class="t" style="left:616.4px;top:507px;font-size:11.5px;color:#dedede;">Lead/Lag</span>
<div class="r" style="left:714px;top:507px;width:170px;height:18.2px;background:#4a4743;box-sizing:border-box;border:1px solid #5b5854"></div>
<span class="t" style="left:718.2px;top:508px;font-size:11.5px;color:#f2f2f2;letter-spacing:0.2px;">-1 day</span>
<span class="t" style="left:616.4px;top:535px;font-size:11.5px;color:#dedede;letter-spacing:0.16px;">Expected Critical</span>
<span class="t" style="left:714.3px;top:535px;font-size:11.5px;color:#dedede;">no</span>
</div></body></html>
